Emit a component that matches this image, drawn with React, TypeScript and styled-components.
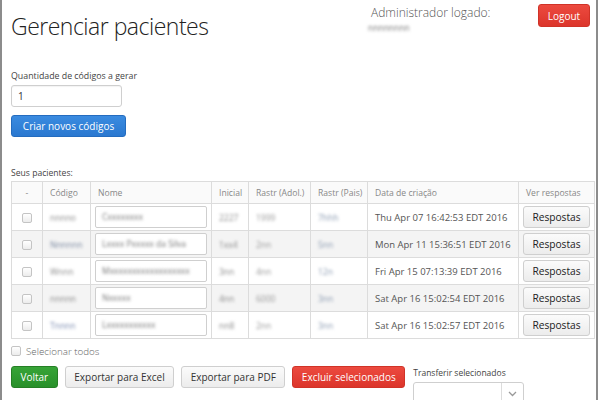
import React from "react";
import styled, { createGlobalStyle, css } from "styled-components";

const Global = createGlobalStyle`
  html, body { margin: 0; padding: 0; background: #fff; }
  body { font-family: "Open Sans", "Liberation Sans", sans-serif; color: #333; }
  * { box-sizing: border-box; }
`;

const Page = styled.div`
  width: 598px;
  height: 400px;
  overflow: hidden;
  border-left: 2px solid #8c8c8c;
  border-right: 2px solid #8c8c8c;
  padding: 0 2px 0 9px;
  background: #fff;
`;

const Header = styled.header`
  display: flex;
  align-items: flex-start;
  padding-top: 4px;
`;

const Title = styled.h1`
  flex: 1;
  margin: 7px 0 0 0;
  font-size: 23px;
  letter-spacing: -0.5px;
  line-height: 30px;
  font-weight: 300;
  color: #222;
`;

const AdminBlock = styled.div`
  width: 170px;
  display: flex;
  flex-direction: column;
  align-items: flex-start;
`;

const AdminLabel = styled.div`
  font-size: 12px;
  line-height: 18px;
  font-weight: 300;
  color: #555;
  margin-left: 3px;
  white-space: nowrap;
`;

const Blur = styled.span<{ $c?: string }>`
  display: inline-block;
  color: ${(p) => p.$c || "#8a8a8a"};
  filter: blur(1.4px);
  font-size: 8.5px;
  line-height: 12px;
  white-space: nowrap;
`;

const btnBase = css`
  font-family: "Open Sans", "Liberation Sans", sans-serif;
  font-size: 10px;
  height: 22px;
  padding: 0 8.5px;
  border-radius: 3px;
  cursor: pointer;
  line-height: 20px;
  white-space: nowrap;
`;

const Button = styled.button<{ $variant?: "red" | "blue" | "green" | "default" }>`
  ${btnBase}
  ${(p) =>
    p.$variant === "red"
      ? css`
          background: linear-gradient(#ec4a3f, #dc352b);
          border: 1px solid #d03328;
          color: #fff;
        `
      : p.$variant === "blue"
      ? css`
          background: linear-gradient(#3a8be0, #2a78d0);
          border: 1px solid #246cbf;
          color: #fff;
        `
      : p.$variant === "green"
      ? css`
          background: linear-gradient(#37a437, #28902a);
          border: 1px solid #257f25;
          color: #fff;
        `
      : css`
          background: linear-gradient(#fbfbfb, #ececec);
          border: 1px solid #cfcfcf;
          color: #333;
        `}
`;

const LogoutButton = styled(Button)`
  width: 52px;
  height: 23px;
  padding: 0;
  margin-right: 4px;
`;

const FieldLabel = styled.label`
  display: block;
  font-size: 8.8px;
  line-height: 14px;
  color: #444;
  margin-top: 28px;
  white-space: nowrap;
`;

const TextInput = styled.input`
  display: block;
  width: 111px;
  height: 22px;
  margin-top: 2px;
  border: 1px solid #cfcfcf;
  border-radius: 3px;
  padding: 0 6px;
  font-family: "Open Sans", "Liberation Sans", sans-serif;
  font-size: 10px;
  color: #333;
  box-shadow: inset 0 1px 1px rgba(0, 0, 0, 0.05);
`;

const CreateButton = styled(Button)`
  display: block;
  margin-top: 8px;
  width: 115px;
  padding: 0;
`;

const SectionLabel = styled.div`
  font-size: 8.6px;
  line-height: 14px;
  color: #444;
  margin-top: 29px;
`;

const Table = styled.table`
  width: 583px;
  margin-top: 1px;
  border-collapse: collapse;
  table-layout: fixed;
  font-size: 9px;
  color: #555;
`;

const Th = styled.th<{ $center?: boolean }>`
  height: 22px;
  border: 1px solid #dcdcdc;
  font-weight: 400;
  font-size: 8.6px;
  color: #888;
  text-align: ${(p) => (p.$center ? "center" : "left")};
  padding: 0 7px;
  background: #fafafa;
  white-space: nowrap;
  overflow: hidden;
`;

const Tr = styled.tr<{ $alt?: boolean }>`
  background: ${(p) => (p.$alt ? "#f4f4f4" : "#fff")};
`;

const Td = styled.td<{ $center?: boolean }>`
  height: 27px;
  border: 1px solid #dcdcdc;
  padding: 0 7px;
  text-align: ${(p) => (p.$center ? "center" : "left")};
  vertical-align: middle;
`;

const InputTd = styled(Td)`
  padding: 0 4px;
`;

const DateText = styled.span`
  font-size: 9.5px;
  color: #555;
  white-space: nowrap;
`;

const NameBox = styled.div`
  height: 22px;
  border: 1px solid #cfcfcf;
  border-radius: 2px;
  background: #fff;
  display: flex;
  align-items: center;
  padding: 0 6px;
`;

const Check = styled.span`
  display: inline-block;
  width: 10px;
  height: 10px;
  border: 1px solid #c4c4c4;
  border-radius: 2px;
  background: linear-gradient(#fff, #ececec);
  vertical-align: middle;
`;

const RespostasButton = styled(Button)`
  width: 67px;
  padding: 0;
  margin-left: -3px;
  font-size: 10.2px;
  color: #222;
`;

const SelectAll = styled.div`
  display: flex;
  align-items: center;
  gap: 5px;
  margin-top: 5px;
  height: 14px;
  font-size: 9.8px;
  font-weight: 300;
  color: #666;
`;

const Actions = styled.div`
  display: flex;
  align-items: flex-start;
  gap: 7px;
  margin-top: 8px;
`;

const TransferGroup = styled.div`
  display: flex;
  flex-direction: column;
  margin-left: 1px;
  margin-top: 1px;
`;

const TransferLabel = styled.div`
  font-size: 8.5px;
  line-height: 12px;
  color: #444;
  white-space: nowrap;
`;

const Select = styled.div`
  margin-top: 3px;
  width: 111px;
  height: 24px;
  border: 1px solid #cfcfcf;
  border-radius: 3px;
  display: flex;
  justify-content: flex-end;
`;

const SelectArrow = styled.div`
  width: 22px;
  border-left: 1px solid #dcdcdc;
  display: flex;
  align-items: center;
  justify-content: center;
`;

type Row = {
  code: string;
  codeColor?: string;
  name: string;
  ini: string;
  adol: string;
  pais: string;
  date: string;
};

const rows: Row[] = [
  { code: "nnnno", name: "Cxxxxxxxx", ini: "2227", adol: "1999", pais: "7hhh", date: "Thu Apr 07 16:42:53 EDT 2016" },
  { code: "Nnnnnn", codeColor: "#7a88a0", name: "Lxxxx Pxxxxx da Silva", ini: "1xx4", adol: "2nn", pais: "5nn", date: "Mon Apr 11 15:36:51 EDT 2016" },
  { code: "Wnnn", name: "Mxxxxxxxxxxxxxxxxxx", ini: "3nn", adol: "4nn", pais: "12n", date: "Fri Apr 15 07:13:39 EDT 2016" },
  { code: "nnnnn", name: "Nxxxxx", ini: "4nn", adol: "6000", pais: "3nn", date: "Sat Apr 16 15:02:54 EDT 2016" },
  { code: "Tnnnn", codeColor: "#7c8cb0", name: "Lxxxxxxxxxxx", ini: "nn8", adol: "2nn", pais: "3nn", date: "Sat Apr 16 15:02:57 EDT 2016" },
];

export default function App() {
  return (
    <>
      <Global />
      <Page>
        <Header>
          <Title>Gerenciar pacientes</Title>
          <AdminBlock>
            <AdminLabel>Administrador logado:</AdminLabel>
            <Blur $c="#777">nnnnnnnn</Blur>
          </AdminBlock>
          <LogoutButton $variant="red">Logout</LogoutButton>
        </Header>

        <FieldLabel>Quantidade de códigos a gerar</FieldLabel>
        <TextInput defaultValue="1" />
        <CreateButton $variant="blue">Criar novos códigos</CreateButton>

        <SectionLabel>Seus pacientes:</SectionLabel>
        <Table>
          <colgroup>
            <col style={{ width: 31 }} />
            <col style={{ width: 48 }} />
            <col style={{ width: 121 }} />
            <col style={{ width: 37 }} />
            <col style={{ width: 62 }} />
            <col style={{ width: 57 }} />
            <col style={{ width: 151 }} />
            <col style={{ width: 76 }} />
          </colgroup>
          <thead>
            <tr>
              <Th $center>-</Th>
              <Th>Código</Th>
              <Th>Nome</Th>
              <Th>Inicial</Th>
              <Th>Rastr (Adol.)</Th>
              <Th>Rastr (Pais)</Th>
              <Th>Data de criação</Th>
              <Th>Ver respostas</Th>
            </tr>
          </thead>
          <tbody>
            {rows.map((r, i) => (
              <Tr key={i} $alt={i % 2 === 1}>
                <Td $center>
                  <Check />
                </Td>
                <Td>
                  <Blur $c={r.codeColor}>{r.code}</Blur>
                </Td>
                <InputTd>
                  <NameBox>
                    <Blur $c="#777">{r.name}</Blur>
                  </NameBox>
                </InputTd>
                <Td>
                  <Blur>{r.ini}</Blur>
                </Td>
                <Td>
                  <Blur $c="#999">{r.adol}</Blur>
                </Td>
                <Td>
                  <Blur $c="#8a9ab0">{r.pais}</Blur>
                </Td>
                <Td>
                  <DateText>{r.date}</DateText>
                </Td>
                <Td>
                  <RespostasButton>Respostas</RespostasButton>
                </Td>
              </Tr>
            ))}
          </tbody>
        </Table>

        <SelectAll>
          <Check />
          Selecionar todos
        </SelectAll>

        <Actions>
          <Button $variant="green">Voltar</Button>
          <Button>Exportar para Excel</Button>
          <Button>Exportar para PDF</Button>
          <Button $variant="red">Excluir selecionados</Button>
          <TransferGroup>
            <TransferLabel>Transferir selecionados</TransferLabel>
            <Select>
              <SelectArrow>
                <svg width="9" height="6" viewBox="0 0 9 6">
                  <path d="M1 1 L4.5 4.5 L8 1" fill="none" stroke="#999" strokeWidth="1.3" />
                </svg>
              </SelectArrow>
            </Select>
          </TransferGroup>
        </Actions>
      </Page>
    </>
  );
}
